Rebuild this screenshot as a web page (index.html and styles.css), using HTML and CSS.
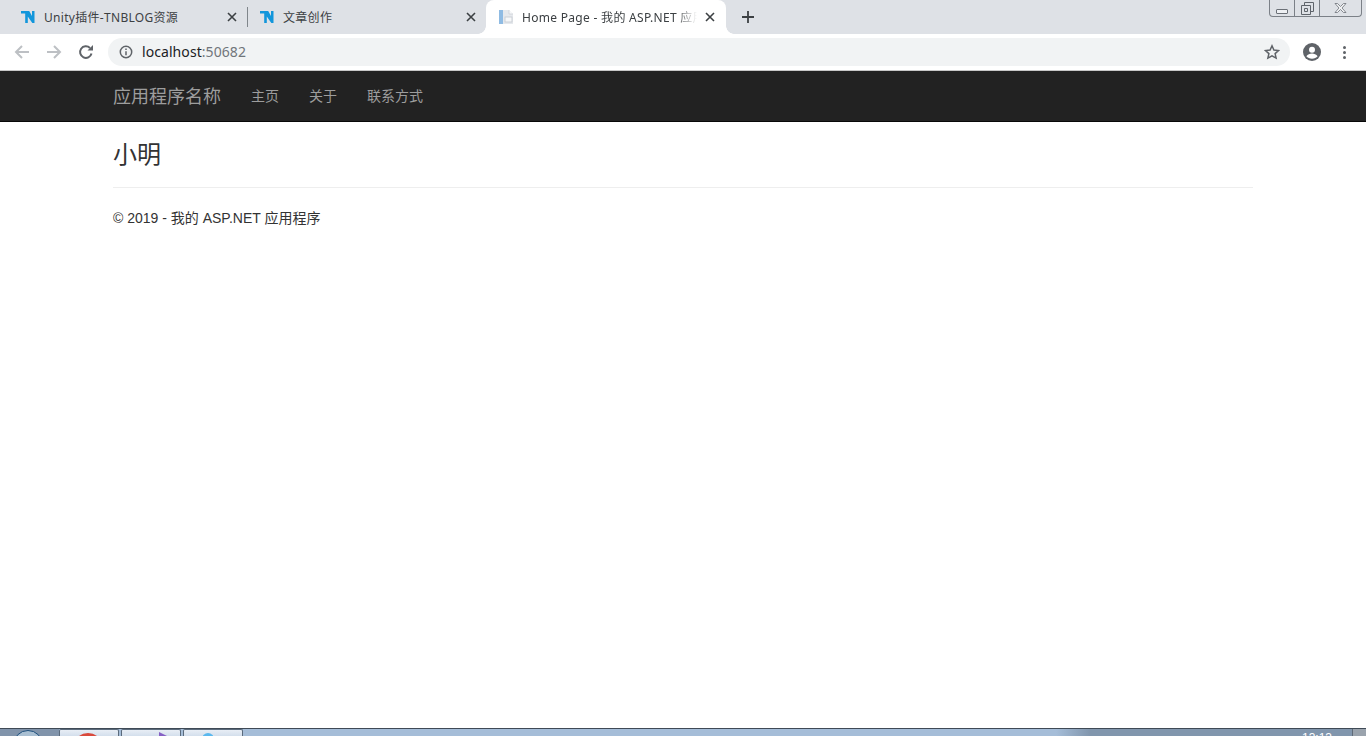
FILE: index.html
```html
<!DOCTYPE html>
<html lang="zh-CN">
<head>
<meta charset="utf-8">
<title>Home Page - 我的 ASP.NET 应用程序</title>
<link rel="stylesheet" href="styles.css">
</head>
<body>
<div class="screen">
  <div class="tabstrip">
    <div class="tab first">
      <svg class="fav" viewBox="0 0 16 16"><path class="tn" d="M1 2h8.200l2.800 5V2h2.500v12h-2.200L7.800 7.500V14H5.200V4.600H1z"/></svg>
      <span class="tab-title">Unity插件-TNBLOG资源</span>
      <svg class="close" viewBox="0 0 10 10"><path d="M1 1l8 8M9 1l-8 8"/></svg>
    </div>
    <div class="sep"></div>
    <div class="tab second">
      <svg class="fav" viewBox="0 0 16 16"><path class="tn" d="M1 2h8.200l2.800 5V2h2.500v12h-2.200L7.800 7.500V14H5.200V4.600H1z"/></svg>
      <span class="tab-title">文章创作</span>
      <svg class="close" viewBox="0 0 10 10"><path d="M1 1l8 8M9 1l-8 8"/></svg>
    </div>
    <div class="tab active">
      <svg class="fav" viewBox="0 0 16 16"><path d="M1 1h10l4 4v10H1z" fill="#e6e9ed"/><rect x="1" y="1" width="4" height="14" fill="#8fbbe3"/><path d="M11 1v4h4" fill="#f7f8f9" stroke="#c9ced4" stroke-width=".7"/><rect x="7" y="8" width="7" height="5" fill="#f6f7f8" stroke="#c4c9cf" stroke-width=".8"/></svg>
      <span class="tab-title fade">Home Page - 我的 ASP.NET 应用程序</span>
      <svg class="close" viewBox="0 0 10 10"><path d="M1 1l8 8M9 1l-8 8"/></svg>
    </div>
    <svg class="newtab" viewBox="0 0 12 12"><path d="M6 0v12M0 6h12"/></svg>
    <div class="winbtns">
      <div class="winbtn min"><span class="min-glyph"></span></div>
      <div class="winbtn max"><svg viewBox="0 0 13 13"><path d="M3.500 3V.5h9v9H10M.5 3.500h9v9h-9zM3.500 6.500h3v3h-3z"/></svg></div>
      <div class="winbtn cls"><svg viewBox="0 0 13 10"><path d="M1 .5h2.500L6.500 3.500 9.500 .5H12L8 5l4 4.500H9.500l-3-3-3 3H1L5 5z"/></svg></div>
    </div>
  </div>
  <div class="toolbar">
    <svg class="tool" viewBox="0 0 16 16"><path class="arrow dim" d="M15 8H2M8 2L2 8l6 6"/></svg>
    <svg class="tool" viewBox="0 0 16 16"><path class="arrow dim" d="M1 8h13M8 2l6 6-6 6"/></svg>
    <svg class="tool reload" viewBox="0 0 16 16"><path class="arrow" d="M13.500 9.500A5.800 5.800 0 1 1 12 4"/><path class="solid" d="M9.500 6.500H15V1z"/></svg>
    <div class="omnibox">
      <svg class="info" viewBox="0 0 14 14"><circle cx="7" cy="7" r="5.700"/><path d="M7 6.200v4M7 3.600v1.500"/></svg>
      <span class="url">localhost<span class="port">:50682</span></span>
      <svg class="star" viewBox="0 0 16 16"><path d="M8 1.800l1.900 4.200 4.600.5-3.400 3.100 1 4.500L8 11.800l-4.100 2.300 1-4.500-3.400-3.100 4.600-.5z"/></svg>
    </div>
    <svg class="avatar" viewBox="0 0 18 18"><circle cx="9" cy="9" r="9" fill="#5f6368"/><circle cx="9" cy="6.800" r="3" fill="#fff"/><path d="M3.400 13.200c1.200-2 3.500-2.800 5.600-2.800s4.400.8 5.600 2.800c-1.200 1.500-3.300 2.500-5.600 2.500s-4.400-1-5.600-2.500z" fill="#fff"/></svg>
    <div class="menu"><i></i><i></i><i></i></div>
  </div>
  <nav class="navbar">
    <div class="container nav-inner">
      <a class="brand">应用程序名称</a>
      <a class="navlink">主页</a>
      <a class="navlink">关于</a>
      <a class="navlink">联系方式</a>
    </div>
  </nav>
  <main class="container content">
    <h2 class="heading">小明</h2>
    <hr class="rule">
    <footer class="foot">© 2019 - 我的 ASP.NET 应用程序</footer>
  </main>
  <div class="taskbar">
    <div class="start"><span class="orb"></span></div>
    <div class="task"><span class="chrome-dot"></span></div>
    <div class="task"><span class="vs-tri"></span></div>
    <div class="task"><span class="blue-dot"></span></div>
    <div class="task-fill"></div>
    <div class="tray"><span class="clock">13:13</span></div>
    <div class="show-desktop"></div>
  </div>
</div>
</body>
</html>
```
FILE: styles.css
```css
* { box-sizing: border-box; }
html, body { margin: 0; height: 100%; overflow: hidden; }
body { font-family: "Liberation Sans", "Noto Sans CJK SC", sans-serif; color: #333; background: #fff; }
.screen { width: 1366px; height: 736px; display: flex; flex-direction: column; overflow: hidden; }

.tabstrip { height: 34px; background: #dee1e6; display: flex; align-items: flex-end; position: relative; flex: none; }
.tab { height: 34px; display: flex; align-items: center; padding-right: 10px; flex: none; }
.tab.first { width: 247px; padding-left: 20px; }
.tab.second { width: 238px; padding-left: 11px; }
.tab.active { width: 240px; background: #fff; border-radius: 8px 8px 0 0; padding: 0 11px 0 12px; position: relative; }
.tab.active::before, .tab.active::after { content: ""; position: absolute; bottom: 0; width: 8px; height: 8px; }
.tab.active::before { left: -8px; background: radial-gradient(circle at 0 0, transparent 7.500px, #fff 8px); }
.tab.active::after { right: -8px; background: radial-gradient(circle at 100% 0, transparent 7.500px, #fff 8px); }
.sep { width: 1px; height: 20px; background: #80868b; align-self: center; flex: none; }
.fav { width: 16px; height: 16px; flex: none; margin-right: 8px; }
.tn { fill: #1296db; }
.tab-title { flex: 1; min-width: 0; padding-top: 2px; font-family: "Noto Sans", "Noto Sans CJK SC", sans-serif; font-size: 12px; line-height: 16px; letter-spacing: .3px; color: #3c4043; white-space: nowrap; overflow: hidden; }
.fade { -webkit-mask-image: linear-gradient(to right, #000 88%, transparent 100%); mask-image: linear-gradient(to right, #000 88%, transparent 100%); }
.close { width: 10px; height: 10px; flex: none; margin-left: 8px; fill: none; stroke: #3c4043; stroke-width: 1.600; }
.newtab { width: 12px; height: 12px; align-self: center; margin-left: 16px; fill: none; stroke: #3c4043; stroke-width: 1.800; flex: none; }

.winbtns { position: absolute; top: 0; right: 4px; height: 17px; width: 93px; display: flex; border: 1px solid #7b8087; border-top: 0; border-radius: 0 0 4px 4px; }
.winbtn { display: flex; align-items: center; justify-content: center; border-right: 1px solid #7b8087; }
.winbtn:last-child { border-right: 0; }
.min { width: 25px; }
.max { width: 25px; }
.cls { flex: 1; }
.min-glyph { width: 12px; height: 5px; border: 1px solid #6b7077; border-radius: 1px; margin-top: 6px; background: #eef0f3; }
.max svg { width: 13px; height: 13px; fill: none; stroke: #5f646b; }
.cls svg { width: 13px; height: 10px; fill: #f2f3f5; stroke: #6b7077; stroke-width: .8; }

.toolbar { height: 37px; flex: none; background: #fff; display: flex; align-items: center; padding-left: 14px; border-bottom: 1px solid #c8c8c8; }
.tool { width: 16px; height: 16px; flex: none; margin-right: 16px; }
.tool.reload { margin-right: 14px; }
.arrow { fill: none; stroke: #5f6368; stroke-width: 2; }
.arrow.dim { stroke: #bdc0c4; }
.solid { fill: #5f6368; }
.omnibox { width: 1182px; height: 28px; border-radius: 14px; background: #f1f3f4; display: flex; align-items: center; padding: 0 10px 0 11px; flex: none; }
.info { width: 14px; height: 14px; flex: none; fill: none; stroke: #5f6368; stroke-width: 1.500; margin-right: 9px; }
.url { flex: 1; padding-bottom: 2px; font-family: "Noto Sans", sans-serif; font-size: 14px; letter-spacing: .07px; color: #202124; }
.port { color: #70757a; }
.star { width: 16px; height: 16px; fill: none; stroke: #5f6368; stroke-width: 1.500; flex: none; }
.avatar { width: 18px; height: 18px; flex: none; margin-left: 13px; }
.menu { display: flex; flex-direction: column; gap: 2px; margin-left: 22px; }
.menu i { display: block; width: 3px; height: 3px; border-radius: 50%; background: #5f6368; }

.container { width: 1140px; margin: 0 auto; }
.navbar { height: 51px; flex: none; background: #222; border-bottom: 1px solid #080808; }
.nav-inner { display: flex; align-items: center; height: 50px; padding-bottom: 2px; }
.brand { font-size: 18px; color: #9d9d9d; margin-right: 30px; }
.navlink { font-size: 14px; color: #9d9d9d; margin-right: 30px; }

.content { flex: 1; }
.heading { margin: 20px 0 10px; font-size: 24px; font-weight: 400; line-height: 25px; color: #333; }
.rule { margin: 20px 0; border: 0; border-top: 1px solid #eee; }
.foot { font-size: 14px; line-height: 20px; color: #333; }

.taskbar { height: 8px; flex: none; display: flex; background: #a5bdd8; border-top: 1px solid #3f4a56; overflow: hidden; }
.start { width: 59px; background: #8194ab; position: relative; flex: none; }
.orb { position: absolute; left: 13px; top: 1px; width: 30px; height: 30px; border-radius: 50%; border: 1px solid #1d4f7c; background: #a9bfd2; }
.task { width: 60px; margin-right: 2px; background: linear-gradient(#e8eef5, #d3dfec); border: 1px solid #5b6b7c; border-bottom: 0; border-radius: 2px 2px 0 0; position: relative; flex: none; overflow: hidden; }
.chrome-dot { position: absolute; left: 13px; top: 3px; width: 30px; height: 30px; border-radius: 50%; background: #d9493c; }
.vs-tri { position: absolute; left: 37px; top: 2px; width: 0; height: 0; border-left: 22px solid #8661c5; border-top: 11px solid transparent; border-bottom: 11px solid transparent; }
.blue-dot { position: absolute; left: 18px; top: 3px; width: 12px; height: 12px; border-radius: 50%; background: #5ab8ee; }
.task-fill { width: 845px; flex: none; background: linear-gradient(to right, #a5bdd8 0 96%, #8196ad 100%); }
.tray { flex: 1; background: #8196ad; position: relative; overflow: hidden; }
.clock { position: absolute; left: 212px; top: 2px; font-size: 12px; color: #fff; }
.show-desktop { width: 14px; flex: none; background: #9aa3ad; border-left: 1px solid #5f6b78; }
```
